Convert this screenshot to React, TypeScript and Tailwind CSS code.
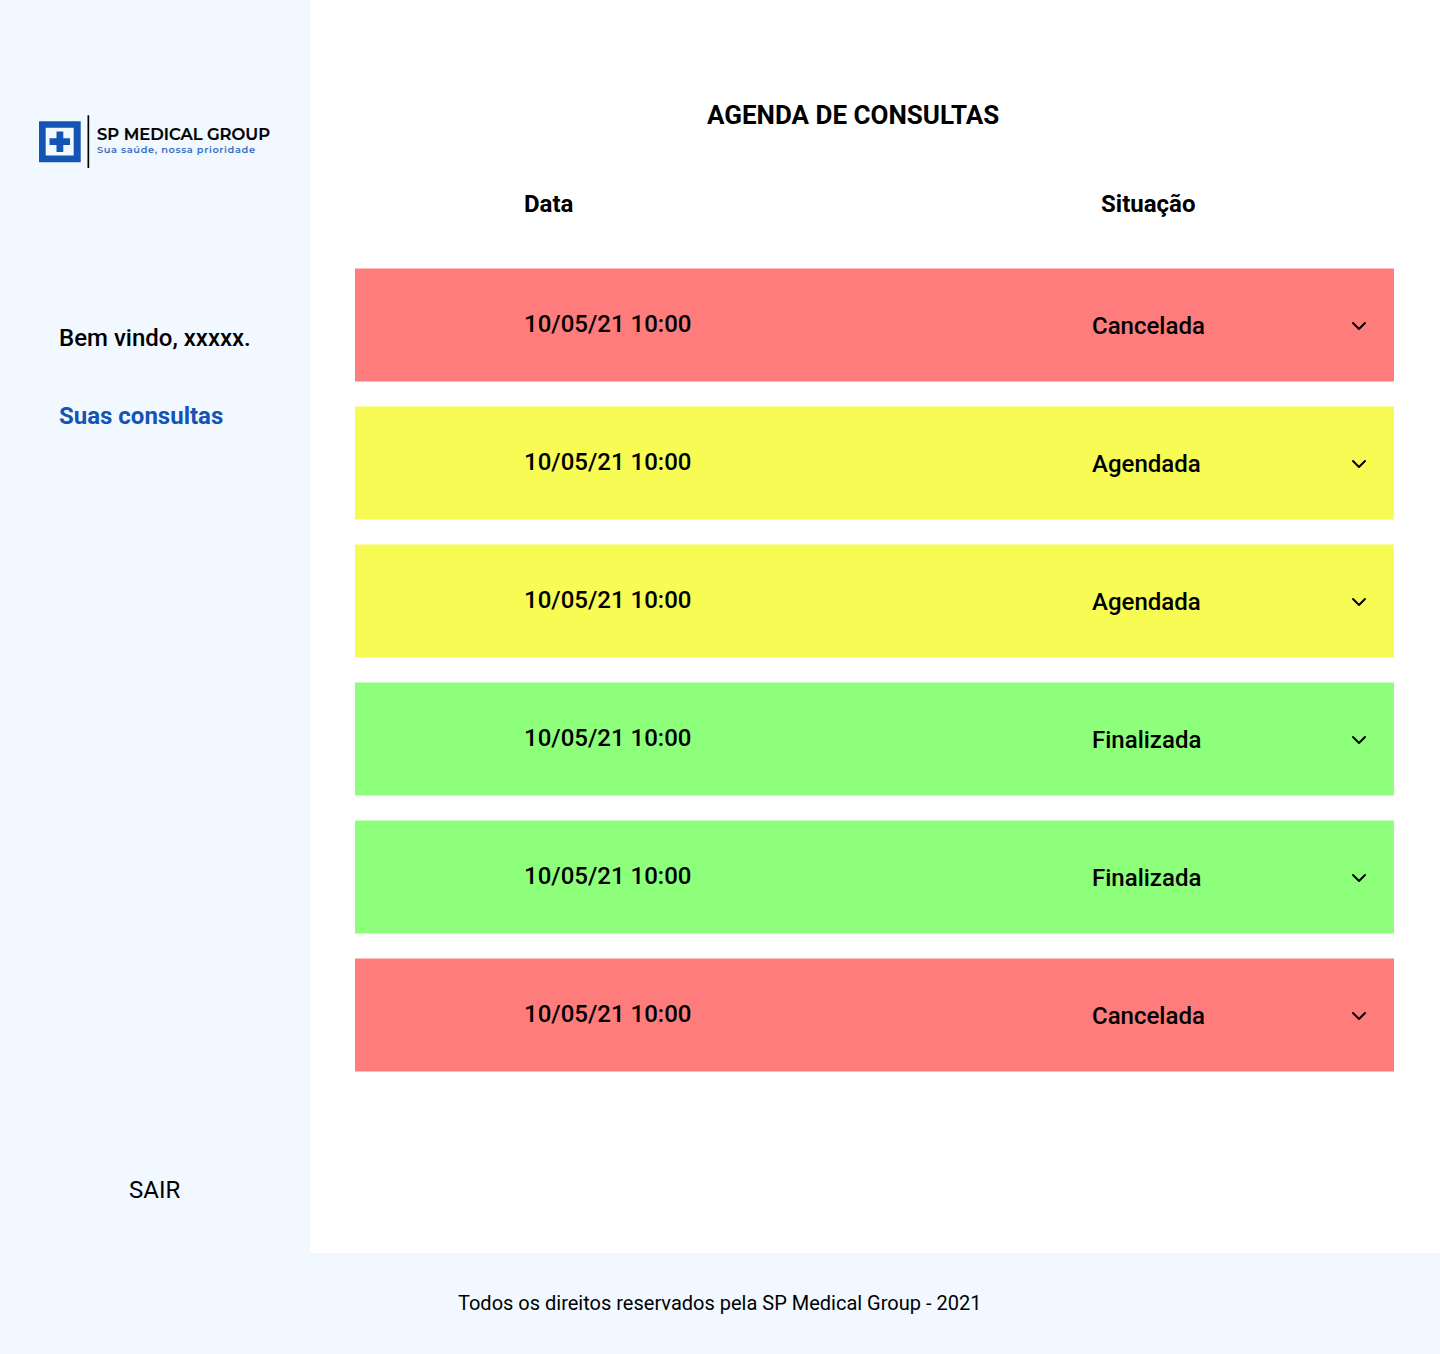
type Status = 'Cancelada' | 'Agendada' | 'Finalizada';

const statusColor: Record<Status, string> = {
  Cancelada: 'bg-[#ff7c7c] border-[#ffbdbd]',
  Agendada: 'bg-[#f7fb53] border-[#fbfda9]',
  Finalizada: 'bg-[#8dff7b] border-[#c6ffbd]',
};

const rows: { date: string; status: Status }[] = [
  { date: '10/05/21 10:00', status: 'Cancelada' },
  { date: '10/05/21 10:00', status: 'Agendada' },
  { date: '10/05/21 10:00', status: 'Agendada' },
  { date: '10/05/21 10:00', status: 'Finalizada' },
  { date: '10/05/21 10:00', status: 'Finalizada' },
  { date: '10/05/21 10:00', status: 'Cancelada' },
];

function Logo() {
  return (
    <div className="ml-[39px] mt-[115px] flex h-[53px] items-center">
      <svg width="51" height="53" viewBox="0 0 51 53" className="shrink-0">
        <path fill="#1454b4" fillRule="evenodd" d="M0 6.300h41.700v41H0zM6.700 12.700v27.800h28v-27.800z" />
        <path fill="#1454b4" d="M17.500 16.500h6.800v6.800h6.700v6.800h-6.700v6.800h-6.800v-6.800h-7v-6.800h7z" />
        <path fill="#000" d="M48.500 0.300h1.700v52.700h-1.700z" />
      </svg>
      <svg width="180" height="53" viewBox="0 0 180 53" className="shrink-0" fontFamily="Montserrat, Inter, sans-serif">
        <text x="7" y="25" fontSize="16" fontWeight="600" stroke="#000" strokeWidth="0.2" textLength="173" lengthAdjust="spacingAndGlyphs">SP MEDICAL GROUP</text>
        <text x="7" y="38.300" fontSize="9.800" fontWeight="600" fill="#3a6fc0" textLength="158" lengthAdjust="spacing">Sua saúde, nossa prioridade</text>
      </svg>
    </div>
  );
}

function ConsultationRow({ date, status }: { date: string; status: Status }) {
  return (
    <li className={`flex h-[114px] items-center border-y ${statusColor[status]}`}>
      <span className="ml-[169px] w-[568px] pb-[2px]">{date}</span>
      <span className="w-[259px] pt-[2px]">{status}</span>
      <svg width="16" height="10" viewBox="0 0 16 10" fill="none" stroke="#000" strokeWidth="2" strokeLinecap="round" strokeLinejoin="round" className="mt-[2px]">
        <path d="M2 2l6 6 6-6" />
      </svg>
    </li>
  );
}

export default function App() {
  return (
    <div className="flex h-[1354px] w-[1440px] flex-col bg-white font-['Roboto',sans-serif] text-2xl leading-7 text-black">
      <div className="flex h-[1253px]">
        <aside className="flex w-[310px] flex-col bg-[#f1f8ff]">
          <Logo />
          <p className="ml-[59px] mt-[156px] font-medium">Bem vindo, xxxxx.</p>
          <a className="ml-[59px] mt-[50px] font-bold text-[#1454b4]">Suas consultas</a>
          <button className="mb-[49px] ml-[129px] mr-auto mt-auto">SAIR</button>
        </aside>
        <main className="flex w-[1130px] flex-col pl-[45px] pr-[46px]">
          <h1 className="ml-[352px] mt-[101px] text-[26px] font-bold">AGENDA DE CONSULTAS</h1>
          <div className="mt-[61px] flex font-bold">
            <span className="ml-[169px] w-[577px]">Data</span>
            <span>Situação</span>
          </div>
          <ul className="mt-[50px] flex flex-col gap-6 font-medium">
            {rows.map((row, i) => (
              <ConsultationRow key={i} {...row} />
            ))}
          </ul>
        </main>
      </div>
      <footer className="flex h-[101px] items-center bg-[#f1f8ff] pb-[2px] pl-[458px] text-xl">
        Todos os direitos reservados pela SP Medical Group - 2021
      </footer>
    </div>
  );
}
